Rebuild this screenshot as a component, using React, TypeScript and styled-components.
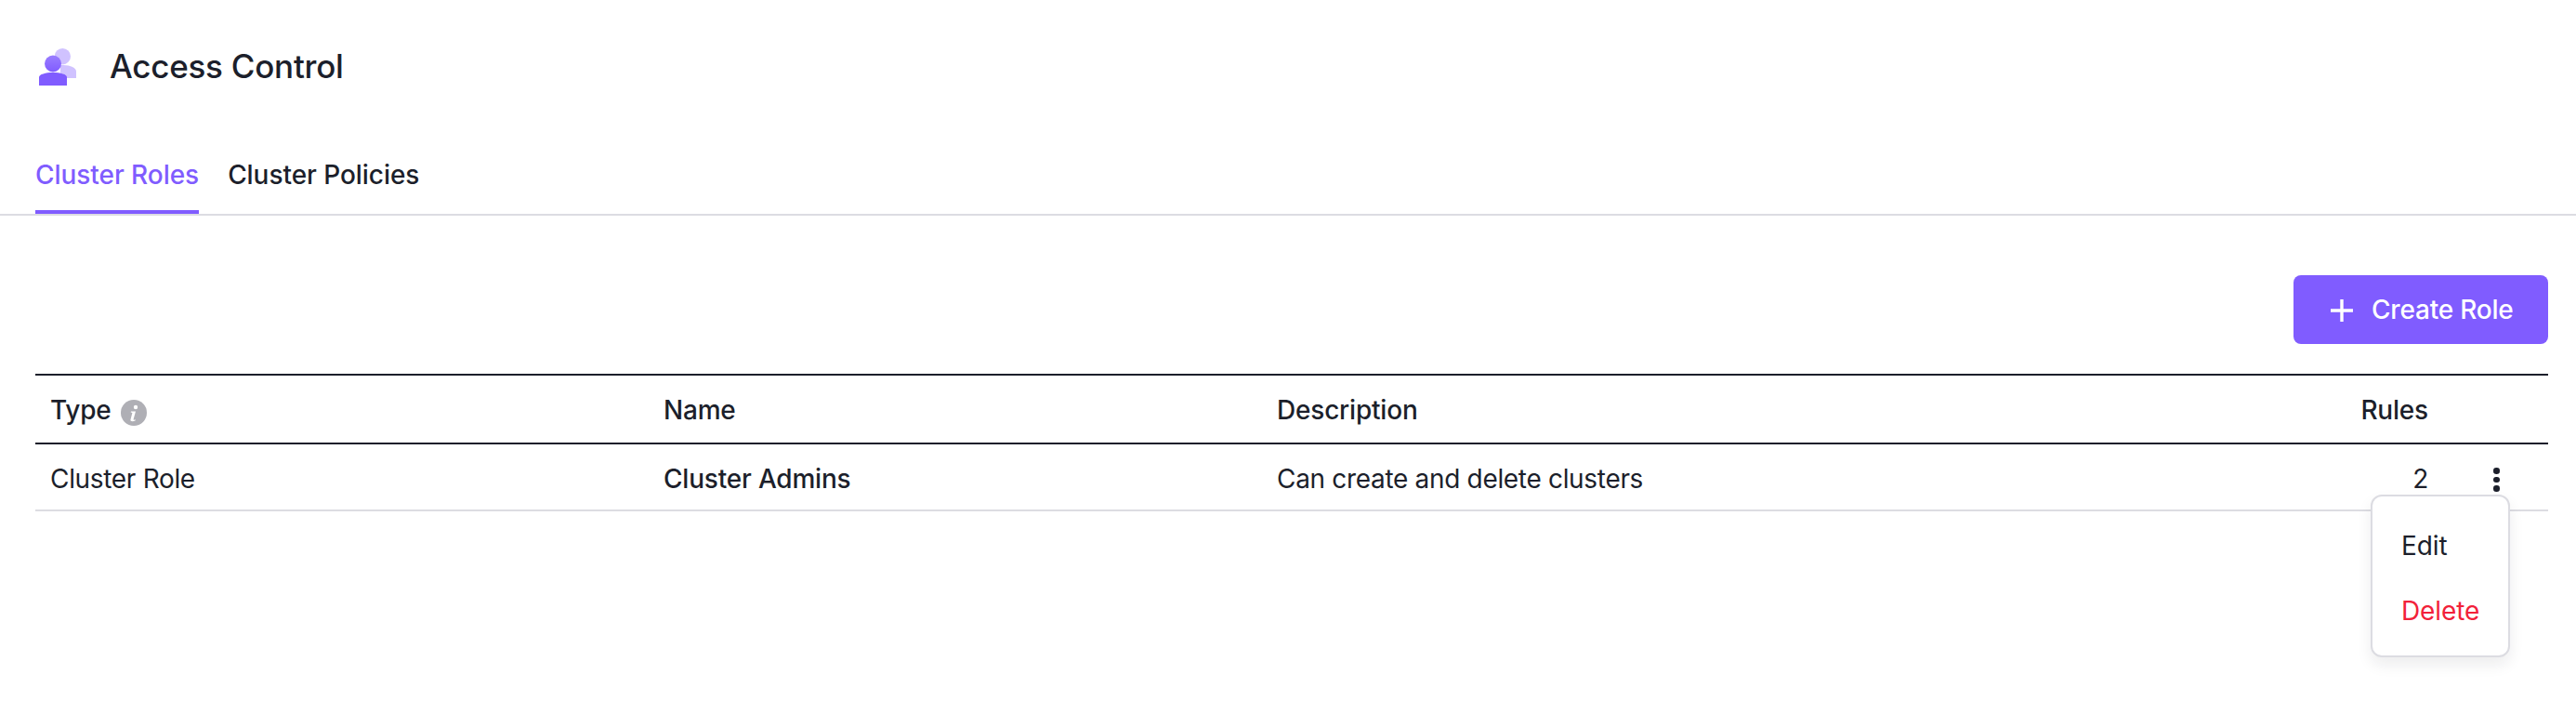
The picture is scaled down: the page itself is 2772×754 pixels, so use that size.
import React from 'react';
import styled, { createGlobalStyle } from 'styled-components';

const Global = createGlobalStyle`
  html, body { margin: 0; padding: 0; background: #fff; }
  body { font-family: Inter, "Liberation Sans", sans-serif; color: #1c1f2b; letter-spacing: -0.2px; }
`;

const Page = styled.div`
  width: 2772px;
  height: 754px;
  background: #fff;
  overflow: hidden;
`;

const Header = styled.header`
  display: flex;
  align-items: center;
  gap: 34px;
  height: 64px;
  padding: 40px 38px 0 40px;
`;

const Title = styled.h1`
  margin: 0 0 2px;
  font-size: 35px;
  line-height: 60px;
  font-weight: 450;
  letter-spacing: -0.25px;
  color: #1c1f2b;
`;

const Tabs = styled.nav`
  display: flex;
  gap: 31px;
  margin-top: 48px;
  padding: 0 38px;
  height: 78px;
  border-bottom: 2px solid #dcdce2;
`;

const Tab = styled.a<{ $active?: boolean }>`
  display: block;
  height: 74px;
  line-height: 72px;
  font-size: 28px;
  font-weight: 500;
  letter-spacing: -0.05px;
  color: ${p => (p.$active ? '#805cff' : '#1c1f2b')};
  border-bottom: 4px solid ${p => (p.$active ? '#805cff' : 'transparent')};
`;

const Toolbar = styled.div`
  display: flex;
  justify-content: flex-end;
  padding: 64px 30px 32px 38px;
`;

const Button = styled.button`
  display: flex;
  align-items: center;
  gap: 20px;
  height: 74px;
  width: 274px;
  padding: 0 0 0 40px;
  box-sizing: border-box;
  border: 0;
  border-radius: 8px;
  background: #805cff;
  color: #fff;
  font-family: inherit;
  font-size: 28px;
  font-weight: 500;
  letter-spacing: -0.2px;
`;

const PlusSvg = styled.svg`
  margin-top: 2px;
`;

const TableWrap = styled.div`
  position: relative;
  margin: 0 30px 0 38px;
`;

const Row = styled.div<{ $head?: boolean }>`
  display: grid;
  grid-template-columns: 660px 660px 1011px 260px 113px;
  align-items: center;
  height: ${p => (p.$head ? '70px' : '66px')};
  padding-top: ${p => (p.$head ? '2px' : '4px')};
  border-bottom: 2px solid ${p => (p.$head ? '#1c1f2b' : '#dcdce2')};
  border-top: ${p => (p.$head ? '2px solid #1c1f2b' : '0')};
  font-size: 28px;
  font-weight: ${p => (p.$head ? 500 : 400)};
  letter-spacing: ${p => (p.$head ? '-0.2px' : '-0.32px')};
  color: #1c1f2b;
`;

const Cell = styled.div<{ $strong?: boolean; $right?: boolean }>`
  display: flex;
  align-items: center;
  gap: 10px;
  padding: 0 16px;
  font-weight: ${p => (p.$strong ? 500 : 'inherit')};
  letter-spacing: ${p => (p.$strong ? '-0.2px' : 'inherit')};
  justify-content: ${p => (p.$right ? 'flex-end' : 'flex-start')};
`;

const InfoSvg = styled.svg`
  margin-top: 6px;
`;

const Dots = styled.div`
  display: flex;
  flex-direction: column;
  gap: 3px;
  margin: 2px 0 0 38px;
`;

const Dot = styled.span`
  width: 6.5px;
  height: 6.5px;
  border-radius: 50%;
  background: #1c1f2b;
`;

const Menu = styled.div`
  position: absolute;
  left: 2513px;
  top: 130px;
  width: 150px;
  height: 175px;
  box-sizing: border-box;
  background: #fff;
  border: 2px solid #dcdce2;
  border-radius: 12px;
  box-shadow: 0 8px 16px rgba(28, 31, 43, 0.08);
  padding: 18px 0 0 31px;
`;

const MenuItem = styled.div<{ $danger?: boolean }>`
  height: 70px;
  line-height: 70px;
  font-size: 28px;
  letter-spacing: -0.1px;
  color: ${p => (p.$danger ? '#f2213a' : '#1c1f2b')};
`;

const AccessIcon = () => (
  <svg width="44" height="44" viewBox="0 0 44 44" aria-hidden="true">
    <defs>
      <linearGradient id="accessFront" x1="0" y1="0" x2="0" y2="1">
        <stop offset="0" stopColor="#9a7dff" />
        <stop offset="1" stopColor="#805cff" />
      </linearGradient>
    </defs>
    <circle cx="27.3" cy="10.7" r="8.7" fill="#d0c2ff" />
    <path d="M25 20h3c8 0 14 3 14 7v7H25z" fill="#d0c2ff" />
    <circle cx="17" cy="18.5" r="9" fill="url(#accessFront)" />
    <path d="M2 42V33c0-3 7-5 15-5s15 2 15 5v9z" fill="#805cff" />
  </svg>
);

const PlusIcon = () => (
  <PlusSvg width="24" height="24" viewBox="0 0 24 24" aria-hidden="true">
    <path d="M12 0v24M0 12h24" stroke="#fff" strokeWidth="3.4" fill="none" />
  </PlusSvg>
);

const InfoIcon = () => (
  <InfoSvg width="28" height="28" viewBox="0 0 28 28" aria-hidden="true">
    <circle cx="14" cy="14" r="14" fill="#afafb5" />
    <circle cx="16" cy="8" r="2.2" fill="#fff" />
    <path d="M11 12.5h5l-2.4 8.6c-.2.7.4.9 2.2.2l-.3 1.2c-2 1-5.6 1.4-5-1.2l1.9-7.4-1.7-.3z" fill="#fff" />
  </InfoSvg>
);

export default function App() {
  return (
    <Page>
      <Global />
      <Header>
        <AccessIcon />
        <Title>Access Control</Title>
      </Header>
      <Tabs>
        <Tab $active>Cluster Roles</Tab>
        <Tab>Cluster Policies</Tab>
      </Tabs>
      <Toolbar>
        <Button>
          <PlusIcon />
          Create Role
        </Button>
      </Toolbar>
      <TableWrap>
        <Row $head>
          <Cell>Type <InfoIcon /></Cell>
          <Cell>Name</Cell>
          <Cell>Description</Cell>
          <Cell $right>Rules</Cell>
          <Cell />
        </Row>
        <Row>
          <Cell>Cluster Role</Cell>
          <Cell $strong>Cluster Admins</Cell>
          <Cell>Can create and delete clusters</Cell>
          <Cell $right>2</Cell>
          <Cell>
            <Dots><Dot /><Dot /><Dot /></Dots>
          </Cell>
        </Row>
        <Menu>
          <MenuItem>Edit</MenuItem>
          <MenuItem $danger>Delete</MenuItem>
        </Menu>
      </TableWrap>
    </Page>
  );
}
